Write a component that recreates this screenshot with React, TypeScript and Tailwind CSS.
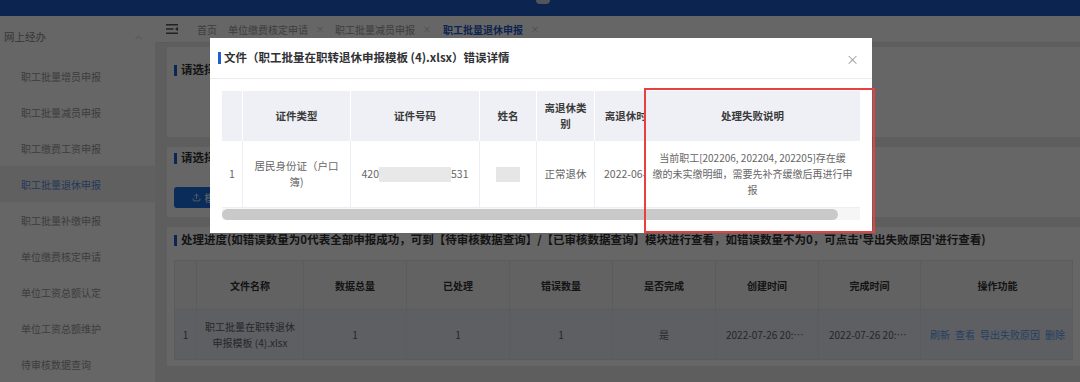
import { Upload, ChevronUp } from "lucide-react";

const sideItems = [
  "职工批量增员申报",
  "职工批量减员申报",
  "职工缴费工资申报",
  "职工批量退休申报",
  "职工批量补缴申报",
  "单位缴费核定申请",
  "单位工资总额认定",
  "单位工资总额维护",
  "待审核数据查询",
];

const progressCols = ["文件名称", "数据总量", "已处理", "错误数量", "是否完成", "创建时间", "完成时间", "操作功能"];

function FoldIcon() {
  return (
    <svg width="12" height="10" viewBox="0 0 12 10" fill="#555">
      <rect x="0" y="0" width="12" height="1.5" />
      <rect x="0" y="4.25" width="7.5" height="1.5" />
      <rect x="0" y="8.5" width="12" height="1.5" />
      <path d="M12 2.8 L9 5 L12 7.2 Z" />
    </svg>
  );
}

function CardTitle({ text, className = "" }: { text: string; className?: string }) {
  return (
    <div className={`flex items-center gap-[4px] h-[14px] ${className}`}>
      <span className="w-[3px] h-[11px] bg-[#1f5fd0]" />
      <span className="font-bold text-[11.5px] text-[#333] whitespace-nowrap">{text}</span>
    </div>
  );
}

export default function App() {
  return (
    <div className="relative w-[1080px] h-[382px] overflow-hidden bg-[#ececec] font-['Noto_Sans_CJK_SC','Noto_Sans',sans-serif]">
      {/* top bar */}
      <div className="h-[16px] bg-[#1e5ac8] flex justify-center">
        <div className="w-[14px] h-[4px] rounded-b-full bg-[#c9d4e6] ml-[6px]" />
      </div>

      <div className="flex h-[366px]">
        {/* sidebar */}
        <aside className="w-[155px] shrink-0 bg-white">
          <div className="h-[42px] flex items-center justify-between pl-[4px] pr-[11px] text-[10.5px] text-[#8a8a8a]">
            <span>网上经办</span>
            <ChevronUp size={11} strokeWidth={1.5} className="text-[#b0b0b0]" />
          </div>
          {sideItems.map((t) => (
            <div
              key={t}
              className={`h-[36px] flex items-center pl-[21px] text-[10px] ${
                t === "职工批量退休申报" ? "bg-[#f1f1f1] text-[#5b8fe0]" : "text-[#999]"
              }`}
            >
              {t}
            </div>
          ))}
        </aside>

        {/* main */}
        <main className="flex-1 min-w-0 flex flex-col">
          <div className="h-[27px] shrink-0 bg-white border-b border-[#e4e4e4] flex items-center pl-[11px] text-[10px] text-[#9a9a9a] whitespace-nowrap">
            <FoldIcon />
            <span className="ml-[19px]">首页</span>
            {["单位缴费核定申请", "职工批量减员申报"].map((t) => (
              <span key={t} className="ml-[11px] flex items-center gap-[8px]">
                {t}
                <span className="text-[8px] text-[#bbb]">×</span>
              </span>
            ))}
            <span className="ml-[12px] flex items-center gap-[8px]">
              <span className="font-bold text-[#1e5ac8]">职工批量退休申报</span>
              <span className="text-[8px] text-[#bbb]">×</span>
            </span>
          </div>

          <div className="flex flex-col gap-[10px] pt-[4px] pl-[12px]">
            <section className="h-[90px] bg-white px-[7px] pt-[16px]">
              <CardTitle text="请选择申报类型" />
            </section>

            <section className="h-[70px] bg-white px-[7px] pt-[4px]">
              <CardTitle text="请选择上传文件" />
              <button className="mt-[22px] h-[21px] w-[88px] rounded-[3px] bg-[#1a6fe0] text-white text-[10px] flex items-center justify-center gap-[4px]">
                <Upload size={9} strokeWidth={2} />
                模板上传
              </button>
            </section>

            <section className="h-[139px] bg-white px-[7px] pt-[6px]">
              <CardTitle text="处理进度(如错误数量为0代表全部申报成功，可到【待审核数据查询】/【已审核数据查询】模块进行查看，如错误数量不为0，可点击'导出失败原因'进行查看)" />
              <div className="mt-[13px] w-[899px] border border-[#e4e7ed]">
                <div className="grid grid-cols-[22px_107px_103px_103px_103px_103px_103px_102px_153px] h-[48px] bg-[#f5f6f8] text-[10px] font-bold text-[#333]">
                  <div className="border-r border-[#e4e7ed]" />
                  {progressCols.map((c, i) => (
                    <div
                      key={c}
                      className={`flex items-center justify-center ${i < progressCols.length - 1 ? "border-r border-[#e4e7ed]" : ""}`}
                    >
                      {c}
                    </div>
                  ))}
                </div>
                <div className="grid grid-cols-[22px_107px_103px_103px_103px_103px_103px_102px_153px] h-[50px] bg-[#e9eef6] border-t border-[#e4e7ed] text-[10px] text-[#606266]">
                  <div className="border-r border-[#e4e7ed] flex items-center justify-center">1</div>
                  <div className="border-r border-[#e4e7ed] flex items-center justify-center text-center leading-[16px]">
                    职工批量在职转退休
                    <br />
                    申报模板 (4).xlsx
                  </div>
                  <div className="border-r border-[#e4e7ed] flex items-center justify-center">1</div>
                  <div className="border-r border-[#e4e7ed] flex items-center justify-center">1</div>
                  <div className="border-r border-[#e4e7ed] flex items-center justify-center">1</div>
                  <div className="border-r border-[#e4e7ed] flex items-center justify-center">是</div>
                  <div className="border-r border-[#e4e7ed] flex items-center px-[10px]">
                    <span className="truncate">2022-07-26 20:31:45</span>
                  </div>
                  <div className="border-r border-[#e4e7ed] flex items-center px-[10px]">
                    <span className="truncate">2022-07-26 20:31:47</span>
                  </div>
                  <div className="flex items-center justify-center gap-[5px] text-[#5d9cf0]">
                    <span>刷新</span>
                    <span>查看</span>
                    <span>导出失败原因</span>
                    <span>删除</span>
                  </div>
                </div>
              </div>
            </section>
          </div>
        </main>
      </div>

      {/* modal mask */}
      <div className="absolute inset-0 bg-black/60" />

      {/* dialog */}
      <div className="absolute left-[210px] top-[38px] w-[662px] h-[195px] bg-white">
        <div className="h-[41px] border-b border-[#ebebeb] flex items-center justify-between pl-[8px] pr-[13px]">
          <div className="flex items-center gap-[3px]">
            <span className="w-[3px] h-[12px] bg-[#1f5fd0]" />
            <span className="font-bold text-[11.5px] text-[#303133]">文件（职工批量在职转退休申报模板 (4).xlsx）错误详情</span>
          </div>
          <span className="text-[13px] leading-none text-[#a0a0a0]">×</span>
        </div>

        <div className="px-[12px] pt-[12px]">
          <div className="flex w-[638px]">
            {/* scrolling part */}
            <div className="w-[423px] overflow-hidden">
              <div className="w-[445px]">
                <div className="grid grid-cols-[21px_108px_129px_57px_58px_72px] h-[50px] bg-[#eef0f5] text-[10.5px] font-bold text-[#3a3a3a]">
                  <div className="border-r border-white" />
                  <div className="border-r border-white flex items-center justify-center">证件类型</div>
                  <div className="border-r border-white flex items-center justify-center">证件号码</div>
                  <div className="border-r border-white flex items-center justify-center">姓名</div>
                  <div className="border-r border-white flex items-center justify-center text-center px-[7px] leading-[16px]">离退休类别</div>
                  <div className="flex items-center justify-center whitespace-nowrap">离退休时间</div>
                </div>
                <div className="grid grid-cols-[21px_108px_129px_57px_58px_72px] h-[67px] text-[10.5px] text-[#666] border-b border-[#ebeef5]">
                  <div className="border-r border-[#ebeef5] flex items-center justify-center">1</div>
                  <div className="border-r border-[#ebeef5] flex items-center justify-center text-center px-[10px] leading-[16px]">居民身份证（户口簿)</div>
                  <div className="border-r border-[#ebeef5] flex items-center justify-center">
                    420
                    <span className="inline-block w-[72px] h-[15px] bg-[#e8e8e8]" />
                    531
                  </div>
                  <div className="border-r border-[#ebeef5] flex items-center justify-center">
                    <span className="inline-block w-[24px] h-[15px] bg-[#e6e6e6]" />
                  </div>
                  <div className="border-r border-[#ebeef5] flex items-center justify-center">正常退休</div>
                  <div className="flex items-center justify-center whitespace-nowrap">2022-06-30</div>
                </div>
              </div>
            </div>

            {/* fixed right column */}
            <div className="w-[215px] shrink-0">
              <div className="h-[50px] bg-[#eef0f5] flex items-center justify-center text-[10.5px] font-bold text-[#3a3a3a]">
                处理失败说明
              </div>
              <div className="h-[67px] border-b border-[#ebeef5] flex items-center justify-center text-center text-[10px] leading-[16px] text-[#666] whitespace-nowrap">
                <div>
                  当前职工[202206, 202204, 202205]存在缓
                  <br />
                  缴的未实缴明细，需要先补齐缓缴后再进行申
                  <br />
                  报
                </div>
              </div>
            </div>
          </div>

          {/* horizontal scrollbar */}
          <div className="w-[638px] h-[12px] bg-[#f6f6f6] flex items-center">
            <div className="w-[616px] h-[11px] rounded-full bg-[#c9c9c9]" />
          </div>
        </div>
      </div>

      {/* red annotation box */}
      <div className="absolute left-[644px] top-[88px] w-[231px] h-[145px] border-2 border-[#e8403f]" />
    </div>
  );
}
